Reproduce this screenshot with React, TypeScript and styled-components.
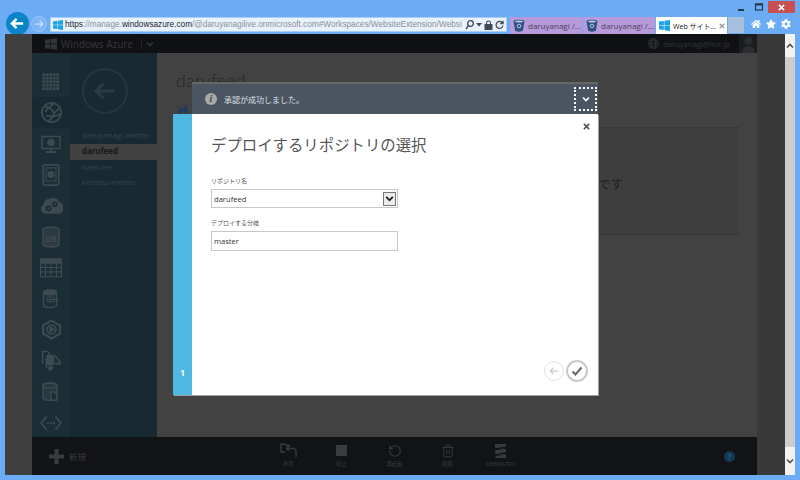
import React from "react";
import styled, { createGlobalStyle } from "styled-components";
import { FaCog, FaHome, FaStar } from "react-icons/fa";
import { RotateCcw, Trash2 } from "lucide-react";

const sans = `"Open Sans", "Noto Sans CJK JP", sans-serif`;

const GlobalStyle = createGlobalStyle`
    html, body {
        margin: 0;
        padding: 0;
        background: #6cacf5;
    }
    * {
        box-sizing: border-box;
    }
`;

const Window = styled.div`
    width: 800px;
    height: 480px;
    background: #6cacf5;
    overflow: hidden;
    font-family: ${sans};
`;

const Chrome = styled.div`
    height: 34px;
    display: flex;
    flex-direction: column;
`;

const WindowControls = styled.div`
    height: 17px;
    padding: 1px 5px 0 0;
    display: flex;
    justify-content: flex-end;
    align-items: flex-start;
`;

const WinButton = styled.div<{ $close?: boolean }>`
    width: ${p => (p.$close ? 27 : 18)}px;
    height: 12px;
    display: flex;
    align-items: center;
    justify-content: center;
    color: ${p => (p.$close ? "#fff" : "#26384d")};
    background: ${p => (p.$close ? "#c75050" : "none")};
`;

const NavRow = styled.div`
    height: 17px;
    padding-left: 6px;
    display: flex;
    align-items: flex-start;
`;

const BackButton = styled.div`
    width: 23px;
    height: 23px;
    margin-top: -5px;
    border-radius: 50%;
    background: #0a84c6;
    display: flex;
    align-items: center;
    justify-content: center;
`;

const ForwardButton = styled.div`
    width: 16px;
    height: 16px;
    margin: -1px 0 0 2px;
    border-radius: 50%;
    border: 1px solid #9cc3ee;
    background: #7db6f6;
    display: flex;
    align-items: center;
    justify-content: center;
`;

const AddressBar = styled.div`
    width: 457px;
    height: 15px;
    margin-left: 3px;
    padding: 0 2px;
    background: #e9f2fc;
    border: 1px solid #a9cdf3;
    display: flex;
    align-items: center;
    gap: 2px;
`;

const Url = styled.div`
    flex: 1;
    min-width: 0;
    white-space: nowrap;
    font-family: "Liberation Sans", sans-serif;
    font-size: 8.25px;
    line-height: 13px;
    color: #8a8f95;
`;

const UrlStrong = styled.span`
    color: #20262c;
`;

const AddressTools = styled.div`
    flex: none;
    display: flex;
    align-items: center;
    gap: 2px;
    color: #3e4a58;
`;

const Tabs = styled.div`
    margin-left: 3px;
    display: flex;
    gap: 1px;
`;

const Tab = styled.div<{ $active?: boolean }>`
    width: ${p => (p.$active ? 71 : 72)}px;
    height: 17px;
    padding: 0 3px;
    display: flex;
    align-items: center;
    gap: 3px;
    font-size: ${p => (p.$active ? 7 : 8)}px;
    white-space: nowrap;
    color: ${p => (p.$active ? "#222" : "#47405c")};
    background: ${p => (p.$active ? "#fff" : "#b79ad9")};
`;

const TabClose = styled.span`
    margin-left: auto;
    padding-right: 2px;
    display: flex;
`;

const NewTab = styled.div`
    width: 16px;
    height: 16px;
    margin-left: 1px;
    background: #a6bfdc;
`;

const BrowserTools = styled.div`
    margin-left: 7px;
    display: flex;
    gap: 5px;
    color: #fff;
    height: 14px;
    align-items: center;
`;

const Stage = styled.div`
    position: relative;
    height: 441px;
    margin: 0 5px;
    display: flex;
`;

const Gutter = styled.div<{ $right?: boolean }>`
    width: ${p => (p.$right ? 28 : 27)}px;
    background: ${p => (p.$right ? "#393939" : "#3f3f3f")};
`;

const Portal = styled.div`
    width: 725px;
    display: flex;
    flex-direction: column;
`;

const PortalHeader = styled.div`
    height: 19px;
    padding-left: 13px;
    background: #101114;
    display: flex;
    align-items: center;
    color: #343537;
`;

const Brand = styled.div`
    width: 68px;
    margin-left: 4px;
    font-size: 10px;
    white-space: nowrap;
    color: #38393b;
`;

const HeaderDivider = styled.div`
    width: 1px;
    height: 12px;
    margin: 0 4px 0 12px;
    background: #222326;
`;

const Account = styled.div`
    margin-left: auto;
    display: flex;
    align-items: center;
    gap: 4px;
    font-size: 7.6px;
    color: #333538;
`;

const Avatar = styled.div`
    width: 18px;
    height: 19px;
    margin-left: 5px;
    background: #1a1c1f;
    display: flex;
    align-items: flex-end;
    justify-content: center;
`;

const Main = styled.div`
    height: 384px;
    display: flex;
`;

const Rail = styled.div`
    width: 38px;
    padding-top: 13px;
    background: #1b2e36;
    overflow: hidden;
    color: #3d4a4f;
`;

const RailItem = styled.div<{ $active?: boolean }>`
    height: 31px;
    display: flex;
    align-items: center;
    justify-content: center;
    background: ${p => (p.$active ? "#172a31" : "none")};
`;

const SubNav = styled.div`
    width: 87px;
    background: #172a31;
`;

const CircleBack = styled.div`
    width: 46px;
    height: 46px;
    margin: 15px 0 0 12px;
    border-radius: 50%;
    border: 2px solid #24373f;
    display: flex;
    align-items: center;
    justify-content: center;
    color: #2a3b42;
`;

const SiteList = styled.div`
    margin-top: 14px;
`;

const SiteItem = styled.div<{ $active?: boolean }>`
    height: 15.8px;
    padding-left: 12px;
    font-size: 7.9px;
    line-height: 15.8px;
    font-weight: ${p => (p.$active ? 700 : 400)};
    color: ${p => (p.$active ? "#171717" : "#34454c")};
    background: ${p => (p.$active ? "#414141" : "none")};
`;

const Content = styled.div`
    flex: 1;
    background: #424242;
    padding: 13px 18px 0 19px;
`;

const PageTitle = styled.div`
    font-family: Lato, sans-serif;
    font-size: 18px;
    line-height: 28px;
    font-weight: 300;
    color: #262626;
`;

const DeployMark = styled.div`
    height: 9px;
    margin-top: 10px;
    display: flex;
`;

const Panel = styled.div`
    height: 108px;
    margin-top: 14px;
    padding: 4px 116px 0 0;
    background: #3e3e3e;
    border-top: 1px solid #373737;
    border-bottom: 1px solid #373737;
    display: flex;
    align-items: center;
    justify-content: flex-end;
    font-size: 12.5px;
    color: #1e1e1e;
`;

const Footer = styled.div`
    height: 38px;
    background: #111316;
    display: grid;
    grid-template-columns: 1fr auto 1fr;
    align-items: center;
    color: #3a3b3d;
`;

const NewButton = styled.div`
    padding-left: 17px;
    display: flex;
    align-items: center;
    gap: 5px;
    font-size: 8.5px;
`;

const Actions = styled.div`
    display: flex;
`;

const Action = styled.div`
    width: 53px;
    height: 38px;
    padding-top: 5px;
    display: flex;
    flex-direction: column;
    align-items: center;
    gap: 1px;
    font-size: 5.4px;
    line-height: 9px;
    white-space: nowrap;
`;

const ActionIcon = styled.div`
    height: 17px;
    display: flex;
    align-items: center;
    justify-content: center;
`;

const Help = styled.div`
    justify-self: end;
    width: 11px;
    height: 11px;
    margin-right: 22px;
    border-radius: 50%;
    background: #123a55;
    color: #2c5a78;
    font-size: 8px;
    font-weight: 700;
    line-height: 11px;
    text-align: center;
`;

const Scrollbar = styled.div`
    width: 10px;
    background: #cdcdcd;
    display: flex;
    flex-direction: column;
    justify-content: space-between;
`;

const ScrollArrow = styled.div<{ $height: number }>`
    height: ${p => p.$height}px;
    background: #f2f2f2;
    display: flex;
    align-items: center;
    justify-content: center;
`;

const Dialog = styled.div`
    position: absolute;
    left: 168px;
    top: 48px;
    width: 425px;
    display: flex;
    flex-direction: column;
`;

const Notice = styled.div`
    height: 32px;
    margin-left: 19px;
    padding: 0 1px 0 13px;
    background: #4a5561;
    border-top: 2px solid #666;
    display: flex;
    align-items: center;
    gap: 7px;
    font-size: 8px;
    color: #dde1e5;
`;

const InfoBadge = styled.div`
    width: 12px;
    height: 12px;
    border-radius: 50%;
    background: #a9a9a9;
    color: #444;
    font-family: "Liberation Serif", serif;
    font-size: 10px;
    font-style: italic;
    font-weight: 700;
    line-height: 12px;
    text-align: center;
`;

const Collapse = styled.div`
    width: 23px;
    height: 24px;
    margin-left: auto;
    border: 2px dotted #fff;
    display: flex;
    align-items: center;
    justify-content: center;
`;

const DialogBody = styled.div`
    height: 281px;
    display: flex;
    box-shadow: 1px 1px 0 #a0a0a0;
`;

const StepStrip = styled.div`
    width: 19px;
    padding-bottom: 16px;
    background: #4fb8e2;
    display: flex;
    align-items: flex-end;
    justify-content: center;
    color: #fff;
    font-size: 9px;
    font-weight: 700;
`;

const Pane = styled.div`
    position: relative;
    flex: 1;
    padding: 21px 10px 13px 19px;
    background: #fff;
    display: flex;
    flex-direction: column;
`;

const CloseButton = styled.div`
    position: absolute;
    top: 9px;
    right: 8px;
    color: #555;
    display: flex;
`;

const Title = styled.h1`
    margin: 0 0 19px;
    font-size: 15.4px;
    line-height: 22px;
    font-weight: 400;
    color: #555;
`;

const Label = styled.div`
    height: 10px;
    margin-bottom: 3px;
    font-size: 6px;
    line-height: 10px;
    color: #555;
`;

const Field = styled.div`
    width: 187px;
    margin-bottom: 10px;
`;

const Select = styled.div`
    height: 19px;
    padding: 0 1px 0 2px;
    border: 1px solid #c8c8c8;
    display: flex;
    align-items: center;
    justify-content: space-between;
    font-size: 7.6px;
    color: #333;
`;

const SelectArrow = styled.div`
    width: 13px;
    height: 14px;
    background: #ececec;
    border: 1px solid #777;
    display: flex;
    align-items: center;
    justify-content: center;
`;

const TextField = styled.div`
    height: 20px;
    padding: 0 2px;
    border: 1px solid #c8c8c8;
    display: flex;
    align-items: center;
    font-size: 7.6px;
    color: #333;
`;

const WizardNav = styled.div`
    margin-top: auto;
    display: flex;
    justify-content: flex-end;
    align-items: center;
    gap: 2px;
`;

const RoundButton = styled.div<{ $muted?: boolean }>`
    width: ${p => (p.$muted ? 20 : 22)}px;
    height: ${p => (p.$muted ? 20 : 22)}px;
    border-radius: 50%;
    border: ${p => (p.$muted ? "1px solid #e2e2e2" : "2px solid #c9c9c9")};
    display: flex;
    align-items: center;
    justify-content: center;
`;

const WinLogo: React.FC<{ size: number; color: string }> = ({ size, color }) => (
    <svg width={size} height={size} viewBox="0 0 12 12" fill={color} style={{ flex: "none" }}>
        <path d="M0 1.7 5.3 1v4.6H0zM5.9.9 12 0v5.6H5.9zM0 6.2h5.3v4.7L0 10.2zM5.9 6.2H12V12l-6.1-.9z" />
    </svg>
);

const Bucket: React.FC = () => (
    <svg width="12" height="13" viewBox="0 0 12 13" style={{ flex: "none" }}>
        <path d="M.5 2C1.5.2 10.5.2 11.500 2l-1.600 9.500C9 13 3 13 2.100 11.500z" fill="#2f4f86" />
        <ellipse cx="6" cy="2.400" rx="4" ry="1" fill="#b7c6df" />
        <circle cx="6" cy="7" r="1.800" fill="none" stroke="#b7c6df" />
    </svg>
);

const Chevron: React.FC<{ up?: boolean; color: string; size?: number }> = ({ up, color, size = 8 }) => (
    <svg width={size} height={size} viewBox="0 0 8 8" fill="none" stroke={color} strokeWidth="1.600">
        <path d={up ? "M1 5.500 4 2.500l3 3" : "M1 2.500l3 3 3-3"} />
    </svg>
);

const Arrow: React.FC<{ size: number; color: string; width?: number; right?: boolean }> = ({
    size,
    color,
    width = 2,
    right,
}) => (
    <svg width={size} height={size} viewBox="0 0 16 16" fill="none" stroke={color} strokeWidth={width}>
        <path d={right ? "M2 8h12M9 3l5 5-5 5" : "M14 8H2M7 3 2 8l5 5"} />
    </svg>
);

const Cross: React.FC<{ size: number; color?: string }> = ({ size, color = "currentColor" }) => (
    <svg width={size} height={size} viewBox="0 0 8 8" fill="none" stroke={color} strokeWidth="1.800">
        <path d="M1 1l6 6M7 1 1 7" />
    </svg>
);

const railIcon = (children: React.ReactNode, w = 20, h = 20) => (
    <svg
        width={w}
        height={h}
        viewBox="0 0 20 20"
        fill="none"
        stroke="currentColor"
        strokeWidth="1.500"
    >
        {children}
    </svg>
);

const gridSquares = [0, 1, 2, 3, 4].flatMap(y =>
    [0, 1, 2, 3, 4].map(x => <rect key={`${x}-${y}`} x={x * 3.5 + 1.3} y={y * 3.5 + 1.300} width="2.800" height="2.800" fill="currentColor" stroke="none" />),
);

function DbIcon() {
    return (
        <svg width="18" height="22" viewBox="0 0 18 22" fill="none">
            <path d="M1 3.500C2 .2 16 .2 17 3.500v15c-1 3.300-15 3.300-16 0z" stroke="currentColor" strokeWidth="1.500" fill="#2d3b40" />
            <text x="9" y="15.500" textAnchor="middle" fontSize="8" fontFamily="Open Sans, sans-serif" fontWeight="700" fill="currentColor">
                DB
            </text>
        </svg>
    );
}

const railIcons: React.ReactNode[] = [
    railIcon(gridSquares),
    railIcon(
        <>
            <circle cx="10" cy="10" r="9.200" strokeWidth="1.800" />
            <path d="M3 4c4 1 8 3 9 6s-2 6-5 8.500M12 1.500c-2 2-5 3-8 8M5 13c4 1 9 1 13.500-1.500M12.500 10c2-1 4-2.500 4-4" strokeWidth="1.800" />
        </>,
        21,
        21,
    ),
    railIcon(
        <>
            <rect x="1" y="2.500" width="18" height="12" />
            <circle cx="10" cy="8.500" r="3" fill="currentColor" />
            <path d="M10 15v2.500M5 18h10" strokeWidth="2" />
        </>,
    ),
    railIcon(
        <>
            <rect x="3" y="0.800" width="14" height="18.400" rx="1.500" />
            <path d="M5.500 3.500h9v12h-9z" strokeWidth="1" />
            <circle cx="10" cy="9.500" r="2.500" fill="currentColor" />
        </>,
        22,
        22,
    ),
    railIcon(
        <>
            <path
                d="M5 16.500a3.500 3.500 0 0 1-1-6.800 4 4 0 0 1 5-4.700 4.500 4.500 0 0 1 7 2.500 4.500 4.500 0 0 1-1 9z"
                fill="currentColor"
            />
            <circle cx="7.500" cy="12.500" r="1.700" stroke="#1b2e36" />
            <circle cx="13" cy="9" r="1.700" stroke="#1b2e36" />
        </>,
        23,
        23,
    ),
    <DbIcon key="db" />,
    railIcon(
        <>
            <rect x="0.500" y="2" width="19" height="16" strokeWidth="1" />
            <rect x="0.500" y="2" width="19" height="3.500" fill="currentColor" />
            <path d="M0 9.500h20M0 13.500h20M5 6v12M10 6v12M15 6v12" strokeWidth="1" />
        </>,
        22,
        22,
    ),
    railIcon(
        <>
            <ellipse cx="9" cy="3.500" rx="6.500" ry="2.500" fill="currentColor" />
            <path d="M2.500 3.500v13c1 2.500 12 2.500 13 0v-13" />
            <path d="M6 8h7v5H6zM9.500 8v5M6 10.500h12" strokeWidth="1" />
        </>,
    ),
    railIcon(
        <>
            <path d="M10 1.500 18 6v8l-8 4.500L2 14V6z" strokeWidth="2" />
            <circle cx="10" cy="10" r="4.200" />
            <path d="M8.500 7.800 12.500 10l-4 2.200z" fill="currentColor" />
        </>,
        21,
        21,
    ),
    railIcon(
        <>
            <path d="M1.500 13V1.500h5l3 4 4 .5c2 1 3 4 5 6v1h-5" />
            <path d="M6 5.500h6v8h-6z" fill="currentColor" />
            <path d="M9 14v4.500M6.500 16 9 19l2.500-3" strokeWidth="2" />
            <path d="M5 7.500v9" />
        </>,
        21,
        21,
    ),
    railIcon(
        <>
            <path d="M2 3.500c1-3.500 13-3.500 14 0v13c-1 2.500-13 2.500-14 0z" fill="currentColor" fillOpacity="0.4" />
            <ellipse cx="9" cy="3.500" rx="7" ry="2.500" />
            <path d="M10 18v-8h3l3 3v5z" fill="#1b2e36" />
        </>,
    ),
    railIcon(
        <>
            <path d="M6 4 1 10l5 6M14 4l5 6-5 6" />
            <path d="M6.500 10h1.500M9.300 10h1.500M12 10h1.500" strokeWidth="2" />
        </>,
        22,
        22,
    ),
];

const sites = ["daruyanagi-twitter", "darufeed", "kankore", "kenzou-memo"];

const footerActions: { label: string; icon: React.ReactNode }[] = [
    {
        label: "参照",
        icon: (
            <svg width="17" height="15" viewBox="0 0 17 15" fill="none" stroke="currentColor" strokeWidth="1.400">
                <path d="M5 9H1V1h4l1.500 1.500H10" />
                <path d="M9 3 6.500 5.500 9 8M7 5.500h5.500a3.500 3.500 0 0 1 3.500 3.500v5" />
            </svg>
        ),
    },
    {
        label: "停止",
        icon: <svg width="11" height="11"><rect width="11" height="11" fill="currentColor" /></svg>,
    },
    { label: "再起動", icon: <RotateCcw size={14} strokeWidth={1.800} /> },
    { label: "削除", icon: <Trash2 size={14} strokeWidth={1.600} /> },
    {
        label: "WEBMATRIX",
        icon: (
            <svg width="13" height="14" viewBox="0 0 13 14" fill="currentColor">
                <path d="M1 0h11v2.500L3 4l9 1v3L3 9.500l9 1V14H2l-1-2 8-1-8-1.500v-3L9 5 1 3.500z" />
            </svg>
        ),
    },
];

export default function App() {
    return (
        <Window>
            <GlobalStyle />
            <Chrome>
                <WindowControls>
                    <WinButton>
                        <svg width="8" height="8"><rect x="1" y="6" width="6" height="2" fill="#26384d" /></svg>
                    </WinButton>
                    <WinButton>
                        <svg width="10" height="8" fill="none" stroke="#26384d"><rect x="1.500" y="1" width="7" height="6" strokeWidth="1.200" /><path d="M1 1.500h8" strokeWidth="2" /></svg>
                    </WinButton>
                    <WinButton $close>
                        <Cross size={7} />
                    </WinButton>
                </WindowControls>
                <NavRow>
                    <BackButton>
                        <Arrow size={15} color="#fff" width={2.600} />
                    </BackButton>
                    <ForwardButton>
                        <Arrow size={10} color="#cfe2f8" width={2} right />
                    </ForwardButton>
                    <AddressBar>
                        <WinLogo size={10} color="#1aa3e8" />
                        <Url>
                            <UrlStrong>https</UrlStrong>://manage.<UrlStrong>windowsazure.com</UrlStrong>
                            /@daruyanagilive.onmicrosoft.com#Workspaces/WebsiteExtension/Websi
                        </Url>
                        <AddressTools>
                            <svg width="9" height="10" viewBox="0 0 9 10" fill="none" stroke="currentColor" strokeWidth="1.300"><circle cx="5.500" cy="3.500" r="2.800" /><path d="M3.500 5.500 1 9" /></svg>
                            <svg width="6" height="4"><path d="M0 0h6L3 3.500z" fill="currentColor" /></svg>
                            <svg width="9" height="10" viewBox="0 0 9 10" fill="currentColor"><path d="M2 4V3a2.500 2.500 0 0 1 5 0v1h1.500v6H.5V4zm1 0h3V3a1.500 1.500 0 0 0-3 0z" /></svg>
                            <svg width="9" height="10" viewBox="0 0 9 10" fill="none" stroke="currentColor" strokeWidth="1.300"><path d="M7.500 3a3.500 3.500 0 1 0 .5 2.500M8 .8V3.500H5.300" /></svg>
                        </AddressTools>
                    </AddressBar>
                    <Tabs>
                        <Tab><Bucket />daruyanagi /...</Tab>
                        <Tab><Bucket />daruyanagi /...</Tab>
                        <Tab $active>
                            <WinLogo size={11} color="#1aa3e8" />Web サイト...
                            <TabClose><Cross size={6} color="#999" /></TabClose>
                        </Tab>
                    </Tabs>
                    <NewTab />
                    <BrowserTools>
                        <FaHome size={10} />
                        <FaStar size={10} />
                        <FaCog size={10} />
                    </BrowserTools>
                </NavRow>
            </Chrome>
            <Stage>
                <Gutter />
                <Portal>
                    <PortalHeader>
                        <WinLogo size={12} color="#333436" />
                        <Brand>Windows Azure</Brand>
                        <HeaderDivider />
                        <Chevron color="#333436" />
                        <Account>
                            <svg width="11" height="11" viewBox="0 0 11 11" fill="none" stroke="#333538"><circle cx="5.500" cy="5.500" r="4.800" /><ellipse cx="5.500" cy="5.500" rx="2.200" ry="4.800" /><path d="M.7 5.500h9.600M1.300 3h8.400M1.300 8h8.400" strokeWidth="0.800" /></svg>
                            daruyanagi@live.jp
                            <Avatar>
                                <svg width="13" height="17" viewBox="0 0 13 17" fill="#2b2d30"><circle cx="6.500" cy="5" r="4" /><path d="M0 17c0-5 3-7 6.500-7s6.500 2 6.500 7z" /></svg>
                            </Avatar>
                        </Account>
                    </PortalHeader>
                    <Main>
                        <Rail>
                            {railIcons.map((icon, i) => (
                                <RailItem key={i} $active={i === 1}>{icon}</RailItem>
                            ))}
                        </Rail>
                        <SubNav>
                            <CircleBack>
                                <Arrow size={24} color="#2a3b42" width={2} />
                            </CircleBack>
                            <SiteList>
                                {sites.map(site => (
                                    <SiteItem key={site} $active={site === "darufeed"}>{site}</SiteItem>
                                ))}
                            </SiteList>
                        </SubNav>
                        <Content>
                            <PageTitle>darufeed</PageTitle>
                            <DeployMark>
                                <svg width="14" height="9" viewBox="0 0 14 9" fill="#1e3a5c"><path d="M1 9 4.500 3 7 6l2.500-6L13 9H9L7 6.500 5 9z" /></svg>
                            </DeployMark>
                            <Panel>です</Panel>
                        </Content>
                    </Main>
                    <Footer>
                        <NewButton>
                            <svg width="15" height="15"><path d="M5.500 0h4v5.500H15v4H9.500V15h-4V9.500H0v-4h5.500z" fill="currentColor" /></svg>
                            新規
                        </NewButton>
                        <Actions>
                            {footerActions.map(action => (
                                <Action key={action.label}>
                                    <ActionIcon>{action.icon}</ActionIcon>
                                    {action.label}
                                </Action>
                            ))}
                        </Actions>
                        <Help>?</Help>
                    </Footer>
                </Portal>
                <Gutter $right />
                <Scrollbar>
                    <ScrollArrow $height={23}><Chevron up color="#505050" /></ScrollArrow>
                    <ScrollArrow $height={28}><Chevron color="#505050" /></ScrollArrow>
                </Scrollbar>
                <Dialog>
                    <Notice>
                        <InfoBadge>i</InfoBadge>
                        承認が成功しました。
                        <Collapse><Chevron color="#fff" /></Collapse>
                    </Notice>
                    <DialogBody>
                        <StepStrip>1</StepStrip>
                        <Pane>
                            <CloseButton><Cross size={7} /></CloseButton>
                            <Title>デプロイするリポジトリの選択</Title>
                            <Field>
                                <Label>リポジトリ名</Label>
                                <Select>
                                    darufeed
                                    <SelectArrow><Chevron color="#222" size={9} /></SelectArrow>
                                </Select>
                            </Field>
                            <Field>
                                <Label>デプロイする分岐</Label>
                                <TextField>master</TextField>
                            </Field>
                            <WizardNav>
                                <RoundButton $muted><Arrow size={10} color="#ccc" /></RoundButton>
                                <RoundButton>
                                    <svg width="12" height="12" viewBox="0 0 12 12" fill="none" stroke="#666" strokeWidth="2"><path d="M1.500 6.500 4.500 9.500 10.500 2.500" /></svg>
                                </RoundButton>
                            </WizardNav>
                        </Pane>
                    </DialogBody>
                </Dialog>
            </Stage>
        </Window>
    );
}
